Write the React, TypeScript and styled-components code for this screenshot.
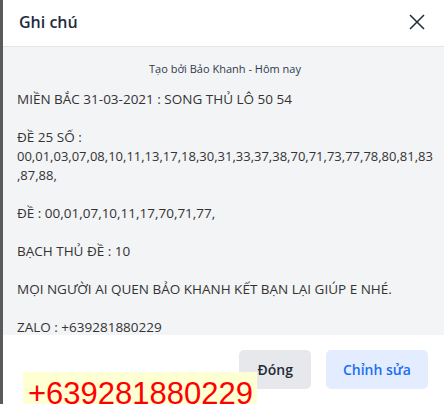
import styled, { createGlobalStyle } from "styled-components";

const GlobalStyle = createGlobalStyle`
  html, body {
    margin: 0;
    padding: 0;
    background: #5a5a5a;
  }
  * {
    box-sizing: border-box;
  }
`;

const Page = styled.div`
  position: relative;
  display: flex;
  width: 444px;
  height: 404px;
  padding-left: 3px;
  background: #5a5a5a;
  overflow: hidden;
  font-family: "Open Sans", "Noto Sans", sans-serif;
`;

const Modal = styled.div`
  flex: 1;
  display: flex;
  flex-direction: column;
  background: #fff;
  border-right: 1px solid #d9dce1;
`;

const Header = styled.div`
  height: 47px;
  flex-shrink: 0;
  display: flex;
  align-items: center;
  justify-content: space-between;
  padding: 0 18px 2px 16px;
  border-bottom: 1px solid #e3e5e8;
`;

const Title = styled.h2`
  margin: 0;
  font-size: 16px;
  font-weight: 600;
  color: #1d2b3c;
`;

const CloseButton = styled.button`
  display: flex;
  align-items: center;
  justify-content: center;
  width: 20px;
  height: 20px;
  padding: 0;
  border: none;
  background: transparent;
  color: #1d2b3c;
`;

const Body = styled.div`
  height: 288px;
  flex-shrink: 0;
  overflow: hidden;
  background: #f3f4f6;
  padding: 13px 12px 0 14px;
`;

const Meta = styled.div`
  text-align: center;
  font-size: 11px;
  line-height: 18px;
  color: #2f3b4b;
  margin-bottom: 12px;
`;

const Note = styled.div`
  font-size: 13.5px;
  line-height: 19px;
  color: #333;
  white-space: pre-wrap;
`;

const Numbers = styled.span`
  font-size: 13px;
`;

const Footer = styled.div`
  flex: 1;
  display: flex;
  justify-content: flex-end;
  align-items: flex-start;
  gap: 15px;
  padding: 15px 17px 0;
`;

const Button = styled.button<{ $primary?: boolean }>`
  height: 39px;
  padding: 0 ${(p) => (p.$primary ? "17px" : "18px")};
  border: none;
  border-radius: 5px;
  font-family: "Open Sans", "Noto Sans", sans-serif;
  font-size: 14px;
  font-weight: 600;
  background: ${(p) => (p.$primary ? "#e3edff" : "#e6e8ec")};
  color: ${(p) => (p.$primary ? "#1a6ff0" : "#222b36")};
`;

const PhoneTag = styled.div`
  position: absolute;
  left: 23px;
  top: 372px;
  width: 234px;
  height: 40px;
  padding-left: 5px;
  background: #ffffd4;
  color: #ff0000;
  font-family: "Liberation Sans", Arial, sans-serif;
  font-size: 31px;
  line-height: 43px;
`;

export default function App() {
  return (
    <>
      <GlobalStyle />
      <Page>
        <Modal>
          <Header>
            <Title>Ghi chú</Title>
            <CloseButton aria-label="Đóng">
              <svg width="16" height="16" viewBox="0 0 16 16">
                <path d="M1 1L15 15M15 1L1 15" stroke="currentColor" strokeWidth="1.5" fill="none" />
              </svg>
            </CloseButton>
          </Header>
          <Body>
            <Meta>Tạo bởi Bảo Khanh - Hôm nay</Meta>
            <Note>
              {"MIỀN BẮC 31-03-2021 : SONG THỦ LÔ 50 54\n\nĐỀ 25 SỐ :\n"}
              <Numbers>
                {"00,01,03,07,08,10,11,13,17,18,30,31,33,37,38,70,71,73,77,78,80,81,83\n,87,88,"}
              </Numbers>
              {"\n\nĐỀ : 00,01,07,10,11,17,70,71,77,\n\nBẠCH THỦ ĐỀ : 10\n\nMỌI NGƯỜI AI QUEN BẢO KHANH KẾT BẠN LẠI GIÚP E NHÉ.\n\nZALO : +639281880229"}
            </Note>
          </Body>
          <Footer>
            <Button>Đóng</Button>
            <Button $primary>Chỉnh sửa</Button>
          </Footer>
        </Modal>
        <PhoneTag>+639281880229</PhoneTag>
      </Page>
    </>
  );
}
